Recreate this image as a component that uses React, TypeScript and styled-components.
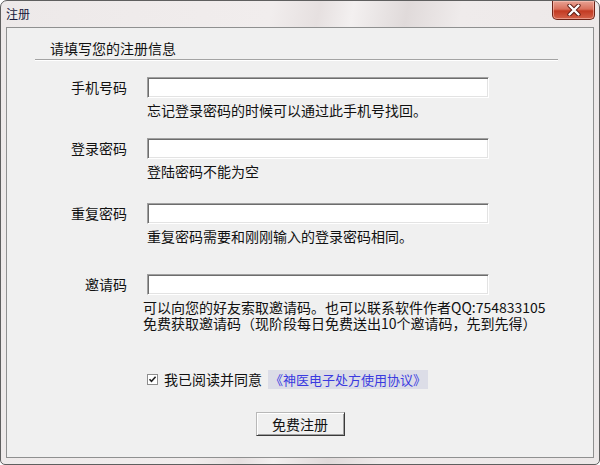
import * as React from "react";
import styled, { createGlobalStyle } from "styled-components";

const GlobalStyle = createGlobalStyle`
  html, body {
    margin: 0;
    padding: 0;
    background: #ffffff;
  }
  body {
    font-family: "Noto Sans CJK SC", "Noto Sans", sans-serif;
  }
`;

const fields = [
  { label: "手机号码", top: 17, hint: ["忘记登录密码的时候可以通过此手机号找回。"] },
  { label: "登录密码", top: 20, hint: ["登陆密码不能为空"] },
  { label: "重复密码", top: 24, hint: ["重复密码需要和刚刚输入的登录密码相同。"] },
  {
    label: "邀请码",
    top: 30,
    hint: [
      "可以向您的好友索取邀请码。也可以联系软件作者QQ:754833105",
      "免费获取邀请码（现阶段每日免费送出10个邀请码，先到先得）",
    ],
  },
];

const App: React.FunctionComponent = () => {
  const [agreed, setAgreed] = React.useState(true);

  return (
    <>
      <GlobalStyle />
      <Window>
        <TitleBar>
          <Title>注册</Title>
          <CloseButton>
            <svg width="14" height="12" viewBox="0 0 14 12">
              <path d="M2.5 1.5 L11.5 10.5 M11.5 1.5 L2.5 10.5" stroke="#5a1a12" strokeWidth="4.2" strokeLinecap="round" />
              <path d="M2.5 1.5 L11.5 10.5 M11.5 1.5 L2.5 10.5" stroke="#ffffff" strokeWidth="2.4" strokeLinecap="round" />
            </svg>
          </CloseButton>
        </TitleBar>
        <Client>
          <Header>请填写您的注册信息</Header>
          {fields.map((f) => (
            <Field key={f.label} $top={f.top}>
              <Label>{f.label}</Label>
              <Input type={f.label.includes("密码") ? "password" : "text"} />
              <Hint $tight={f.hint.length > 1}>
                {f.hint.map((line) => (
                  <div key={line}>{line}</div>
                ))}
              </Hint>
            </Field>
          ))}
          <Agreement>
            <CheckBox onClick={() => setAgreed(!agreed)}>
              {agreed && (
                <svg width="9" height="9" viewBox="0 0 9 9">
                  <path d="M1.5 4.2 L3.5 6.4 L7.6 1.8" stroke="#222" strokeWidth="1.6" fill="none" />
                </svg>
              )}
            </CheckBox>
            <span>我已阅读并同意</span>
            <Link>《神医电子处方使用协议》</Link>
          </Agreement>
          <ButtonRow>
            <Button>免费注册</Button>
          </ButtonRow>
        </Client>
      </Window>
    </>
  );
};

const Window = styled.div`
  width: 600px;
  height: 465px;
  box-sizing: border-box;
  border: 1px solid #5f5f5f;
  border-radius: 7px 7px 5px 5px;
  overflow: hidden;
  display: flex;
  flex-direction: column;
  background: linear-gradient(
    100deg,
    #ede9e9 0%,
    #f1eded 40%,
    #e6e0e0 47%,
    #f3f0f0 52%,
    #e0dada 60%,
    #efebeb 68%,
    #ece8e8 100%
  );
`;

const TitleBar = styled.div`
  height: 26px;
  flex: none;
  display: flex;
  align-items: flex-start;
`;

const Title = styled.div`
  margin: 6px 0 0 5px;
  font-size: 12px;
  line-height: 14px;
  color: #17173a;
`;

const CloseButton = styled.div`
  margin-left: auto;
  margin-right: 4px;
  width: 43px;
  height: 19px;
  box-sizing: border-box;
  border: 1px solid #6e2418;
  border-top: none;
  border-radius: 0 0 5px 5px;
  display: flex;
  align-items: center;
  justify-content: center;
  background: linear-gradient(180deg, #e8a394 0%, #d9705c 45%, #c23a22 55%, #d4624a 100%);
  box-shadow: inset 0 0 0 1px rgba(255, 210, 200, 0.5);
`;

const Client = styled.div`
  flex: 1;
  margin: 0 5px 6px 5px;
  border: 1px solid #8f9090;
  background: #f0f0f0;
  color: #111111;
  font-size: 14px;
`;

const Header = styled.div`
  margin: 0 35px 0 28px;
  padding: 10px 0 1px 15px;
  line-height: 20px;
  border-bottom: 1px solid #a3a3a3;
  box-shadow: 0 1px 0 #ffffff;
`;

const Field = styled.div<{ $top: number }>`
  display: grid;
  grid-template-columns: 120px 342px;
  column-gap: 20px;
  margin-top: ${(props) => props.$top}px;
`;

const Label = styled.div`
  text-align: right;
  line-height: 21px;
`;

const Input = styled.input`
  width: 342px;
  height: 21px;
  box-sizing: border-box;
  margin: 0;
  padding: 0 3px;
  background: #ffffff;
  border: 1px solid;
  border-color: #a0a0a0 #ffffff #ffffff #a0a0a0;
  box-shadow: inset 1px 1px 0 #6d6d6d, inset -1px -1px 0 #e3e3e3;
  outline: none;
  font-size: 14px;
`;

const Hint = styled.div<{ $tight?: boolean }>`
  grid-column: 2;
  margin-top: 4px;
  line-height: 16px;
  white-space: nowrap;
  margin-left: ${(props) => (props.$tight ? "-4px" : "0")};
`;

const Agreement = styled.div`
  margin-top: 38px;
  padding-left: 140px;
  display: flex;
  align-items: center;
  line-height: 20px;
  height: 20px;
`;

const CheckBox = styled.span`
  width: 11px;
  height: 11px;
  box-sizing: border-box;
  border: 1px solid #8d8d8d;
  background: #ffffff;
  display: flex;
  align-items: center;
  justify-content: center;
  margin-right: 6px;
  cursor: pointer;
`;

const Link = styled.span`
  margin-left: 6px;
  padding: 0 2px;
  background: #dcdde7;
  color: #3a3ae0;
  font-size: 13px;
  line-height: 19px;
  cursor: pointer;
`;

const ButtonRow = styled.div`
  margin-top: 23px;
  display: flex;
  justify-content: center;
`;

const Button = styled.button`
  width: 89px;
  height: 24px;
  box-sizing: border-box;
  margin: 0;
  padding: 0;
  border: 1px solid;
  border-color: #b8b8b8 #3a3a3a #3a3a3a #b8b8b8;
  box-shadow: inset 1px 1px 0 #ffffff, inset -1px -1px 0 #a0a0a0;
  background: #f0f0f0;
  font-family: "Noto Sans CJK SC", sans-serif;
  font-size: 14px;
  color: #111111;
`;

export default App;
